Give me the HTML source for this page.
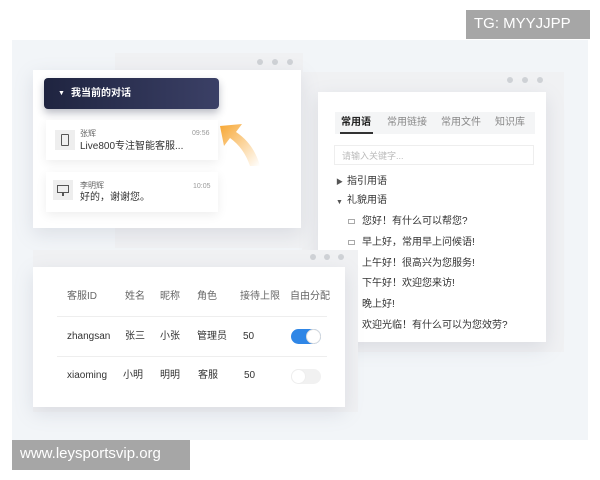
<!DOCTYPE html>
<html><head><meta charset="utf-8"><style>
*{margin:0;padding:0;box-sizing:border-box}
body{width:600px;height:480px;background:#fff;position:relative;overflow:hidden;font-family:"Liberation Sans","Noto Sans CJK SC",sans-serif;color:#333}
.abs{position:absolute}
.bg{left:12px;top:40px;width:576px;height:400px;background:#f2f5f8}
.chrome{background:#f0f1f3}
.dot{position:absolute;width:6px;height:6px;border-radius:50%;background:#cfd2d6}
.win{background:#fff;box-shadow:0 6px 18px rgba(120,130,150,.18)}
.label{background:#a6a6a6;color:#fff;font-size:15px;line-height:28px;padding:0 8px}
.t{position:absolute;font-size:10px;line-height:12px;height:12px;white-space:nowrap}
</style></head><body>
<div class="abs bg"></div>
<div class="abs label" style="left:466px;top:10px;height:29px;width:124px">TG: MYYJJPP</div>
<div class="abs label" style="left:12px;top:440px;height:30px;width:178px">www.leysportsvip.org</div>

<div class="abs chrome" style="left:115px;top:53px;width:188px;height:195px"></div>
<div class="dot" style="left:257px;top:59px"></div><div class="dot" style="left:272px;top:59px"></div><div class="dot" style="left:287px;top:59px"></div>

<div class="abs chrome" style="left:302px;top:72px;width:262px;height:280px"></div>
<div class="dot" style="left:507px;top:77px"></div><div class="dot" style="left:522px;top:77px"></div><div class="dot" style="left:537px;top:77px"></div>
<div class="abs win" style="left:318px;top:92px;width:228px;height:250px"></div>
<div class="abs" style="left:335px;top:112px;width:200px;height:22px;background:#f4f5f6"></div>
<div class="t" style="left:341px;top:117px;font-weight:bold;color:#222">常用语</div>
<div class="abs" style="left:340px;top:132px;width:33px;height:2px;background:#333"></div>
<div class="t" style="left:387px;top:117px;color:#888">常用链接</div>
<div class="t" style="left:441px;top:117px;color:#888">常用文件</div>
<div class="t" style="left:495px;top:117px;color:#888">知识库</div>
<div class="abs" style="left:334px;top:145px;width:200px;height:20px;border:1px solid #eee;background:#fff"></div>
<div class="t" style="left:342px;top:150px;color:#bbb;font-size:9px">请输入关键字...</div>
<div class="t" style="left:336px;top:177px;font-size:7px;color:#555">▶</div>
<div class="t" style="left:347px;top:176px">指引用语</div>
<div class="t" style="left:336px;top:197px;font-size:7px;color:#555">▼</div>
<div class="t" style="left:347px;top:195px">礼貌用语</div>
<div class="abs" style="left:348px;top:219px;width:7px;height:5px;border:1px solid #aaa"></div>
<div class="t" style="left:362px;top:216px">您好！有什么可以帮您?</div>
<div class="abs" style="left:348px;top:240px;width:7px;height:5px;border:1px solid #aaa"></div>
<div class="t" style="left:362px;top:237px">早上好，常用早上问候语!</div>
<div class="t" style="left:362px;top:258px">上午好！很高兴为您服务!</div>
<div class="t" style="left:362px;top:278px">下午好！欢迎您来访!</div>
<div class="t" style="left:362px;top:299px">晚上好!</div>
<div class="t" style="left:362px;top:320px">欢迎光临！有什么可以为您效劳?</div>

<div class="abs win" style="left:33px;top:70px;width:268px;height:158px"></div>
<div class="abs" style="left:44px;top:78px;width:175px;height:31px;border-radius:4px;background:linear-gradient(90deg,#1f2440,#3b4066);box-shadow:0 4px 8px rgba(30,36,64,.3)"></div>
<div class="t" style="left:58px;top:88px;color:#fff;font-size:7px">▼</div>
<div class="t" style="left:71px;top:88px;color:#fff;font-weight:bold">我当前的对话</div>
<div class="abs" style="left:46px;top:120px;width:172px;height:40px;background:#fff;box-shadow:0 3px 10px rgba(0,0,0,.07)"></div>
<div class="abs" style="left:55px;top:130px;width:20px;height:20px;background:#eee"></div>
<div class="abs" style="left:61px;top:134px;width:8px;height:12px;border:1.5px solid #555;border-radius:1px"></div>
<div class="t" style="left:80px;top:128px;font-size:8px;color:#666">张辉</div>
<div class="t" style="left:192px;top:128px;font-size:7px;color:#999">09:56</div>
<div class="t" style="left:80px;top:141px">Live800专注智能客服...</div>
<div class="abs" style="left:46px;top:172px;width:172px;height:40px;background:#fff;box-shadow:0 3px 10px rgba(0,0,0,.07)"></div>
<div class="abs" style="left:53px;top:180px;width:20px;height:20px;background:#eee"></div>
<div class="abs" style="left:57px;top:185px;width:12px;height:8px;border:1.5px solid #555"></div>
<div class="abs" style="left:62px;top:193px;width:2px;height:3px;background:#555"></div>
<div class="t" style="left:80px;top:180px;font-size:8px;color:#666">李明辉</div>
<div class="t" style="left:193px;top:181px;font-size:7px;color:#999">10:05</div>
<div class="t" style="left:80px;top:192px">好的，谢谢您。</div>
<svg class="abs" style="left:218px;top:122px" width="50" height="50" viewBox="0 0 50 50"><defs><linearGradient id="g" x1="0" y1="0" x2="1" y2="1"><stop offset="0" stop-color="#f7a631"/><stop offset="1" stop-color="#f7a631" stop-opacity="0"/></linearGradient></defs><path d="M2 4 L24 2 L18 10 Q36 22 42 44 L32 44 Q26 26 12 16 L6 24 Z" fill="url(#g)"/></svg>

<div class="abs chrome" style="left:33px;top:250px;width:325px;height:162px"></div>
<div class="dot" style="left:310px;top:254px"></div><div class="dot" style="left:324px;top:254px"></div><div class="dot" style="left:338px;top:254px"></div>
<div class="abs win" style="left:33px;top:267px;width:312px;height:140px"></div>
<div class="t" style="left:67px;top:291px;color:#666">客服ID</div>
<div class="t" style="left:125px;top:291px;color:#666">姓名</div>
<div class="t" style="left:160px;top:291px;color:#666">昵称</div>
<div class="t" style="left:197px;top:291px;color:#666">角色</div>
<div class="t" style="left:240px;top:291px;color:#666">接待上限</div>
<div class="t" style="left:290px;top:291px;color:#666">自由分配</div>
<div class="abs" style="left:57px;top:316px;width:270px;height:1px;background:#eee"></div>
<div class="t" style="left:67px;top:331px">zhangsan</div>
<div class="t" style="left:125px;top:331px">张三</div>
<div class="t" style="left:160px;top:331px">小张</div>
<div class="t" style="left:197px;top:331px">管理员</div>
<div class="t" style="left:243px;top:331px">50</div>
<div class="abs" style="left:291px;top:329px;width:30px;height:15px;border-radius:8px;background:#2f86e6"></div>
<div class="abs" style="left:306px;top:329px;width:15px;height:15px;border-radius:50%;background:#fff;border:1px solid #ddd"></div>
<div class="abs" style="left:57px;top:356px;width:270px;height:1px;background:#eee"></div>
<div class="t" style="left:67px;top:370px">xiaoming</div>
<div class="t" style="left:123px;top:370px">小明</div>
<div class="t" style="left:160px;top:370px">明明</div>
<div class="t" style="left:198px;top:370px">客服</div>
<div class="t" style="left:244px;top:370px">50</div>
<div class="abs" style="left:291px;top:369px;width:30px;height:15px;border-radius:8px;background:#f1f1f1"></div>
<div class="abs" style="left:291px;top:369px;width:15px;height:15px;border-radius:50%;background:#fff;border:1px solid #eee"></div>
</body></html>
